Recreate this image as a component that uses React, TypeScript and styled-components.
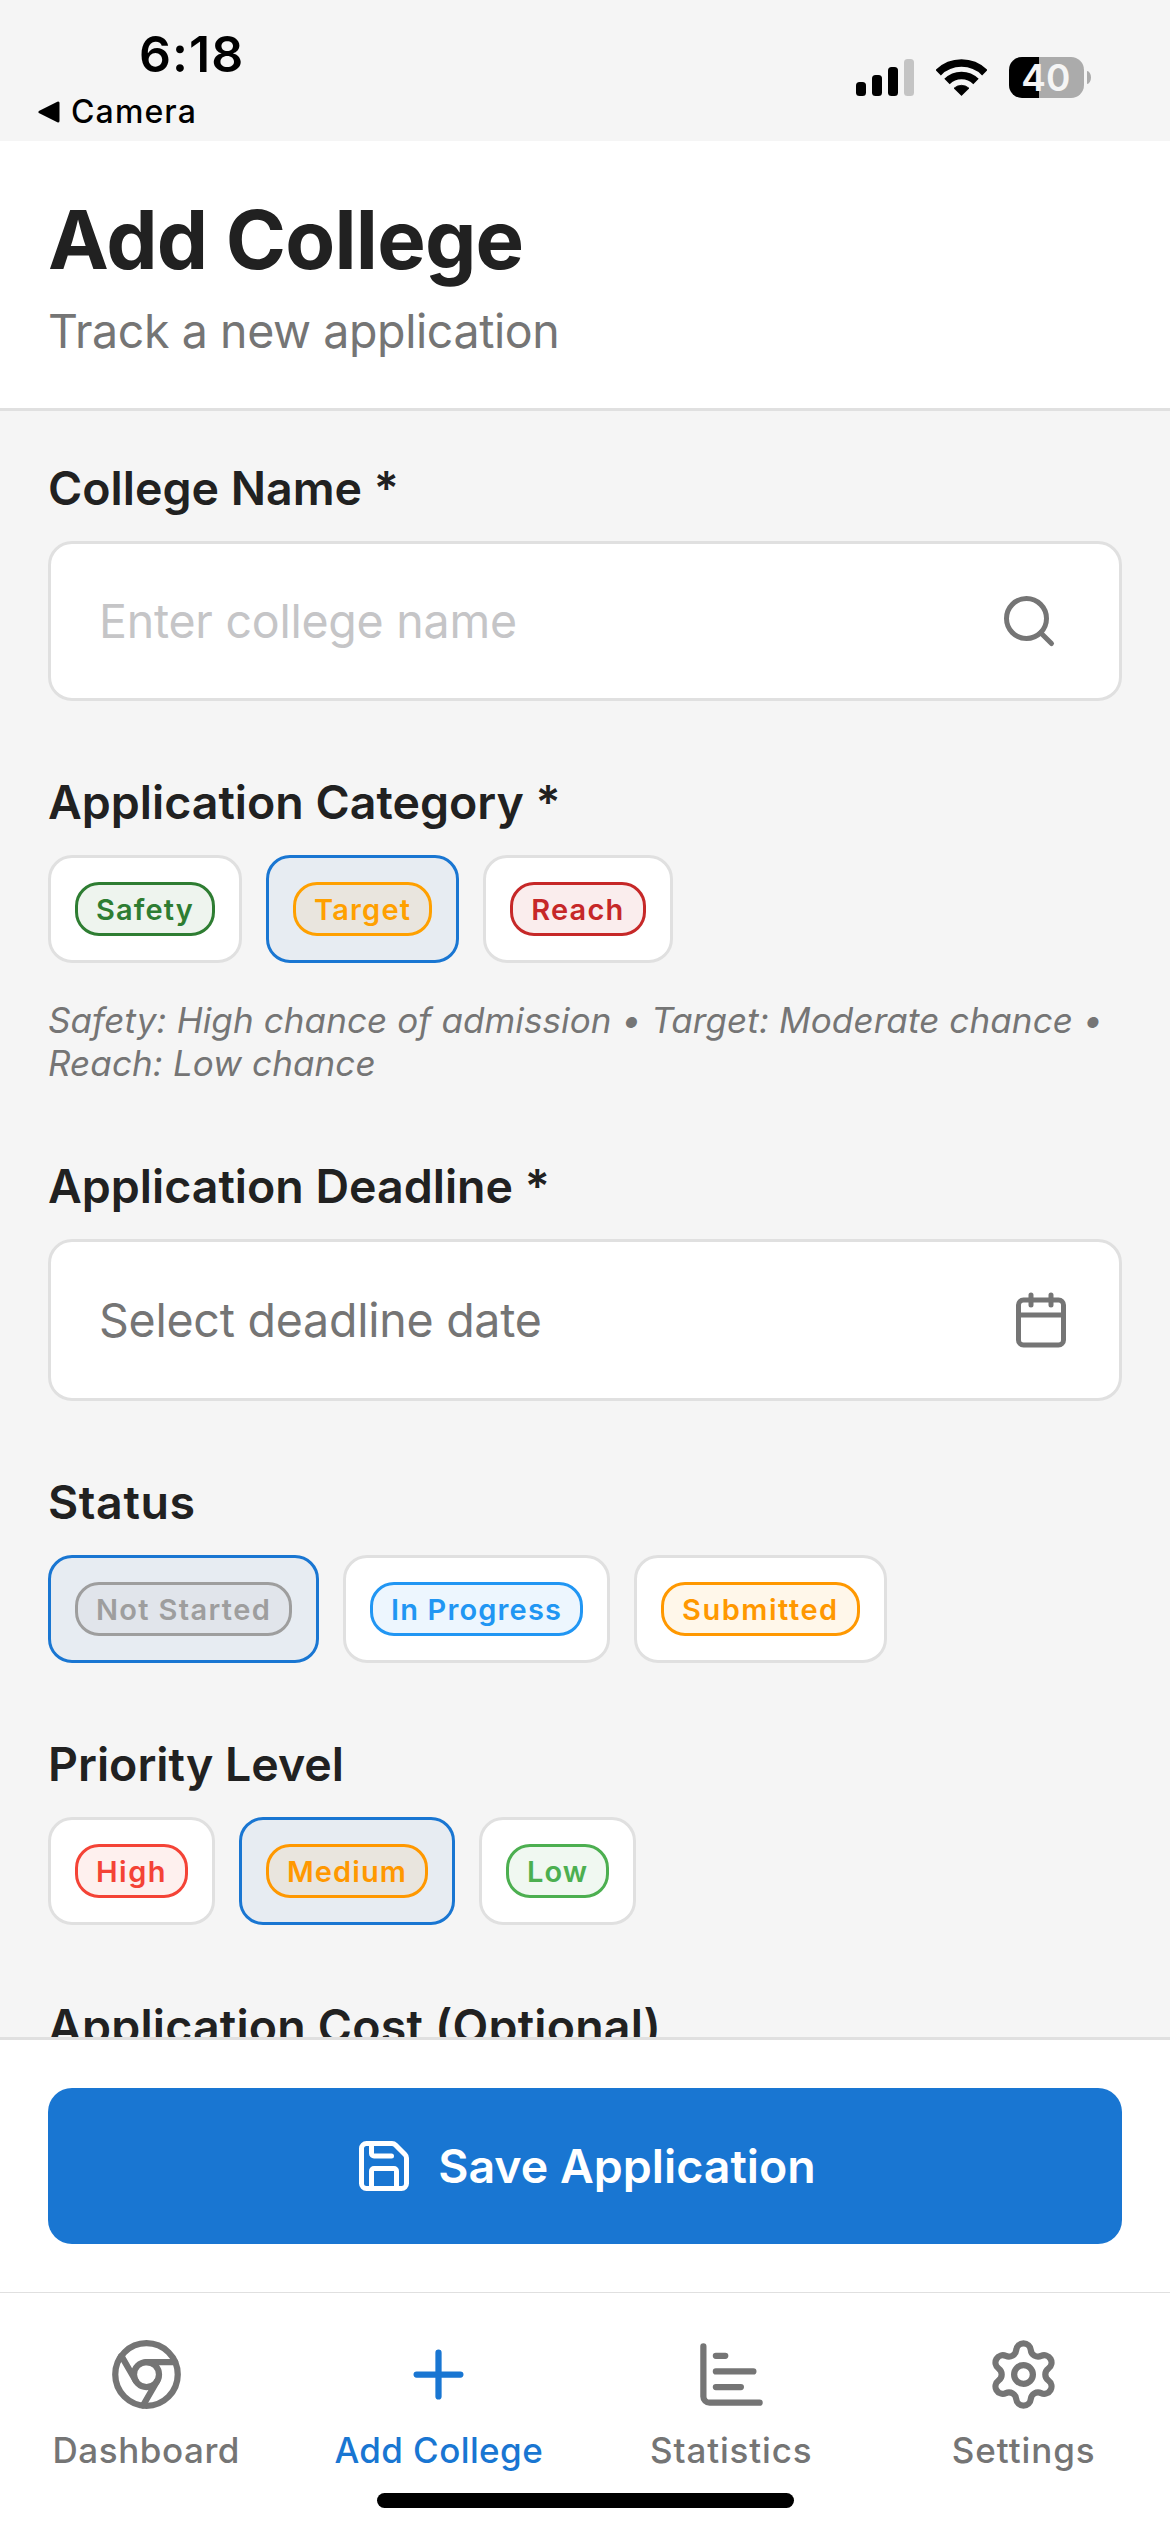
import React, { useState } from "react";
import styled, { createGlobalStyle } from "styled-components";
import { Save, Search, Settings } from "lucide-react";

const color = {
  primary: "#1976d2",
  text: "#212121",
  muted: "#757575",
  placeholder: "#c5c5c7",
  border: "#e0e0e0",
  surface: "#ffffff",
  page: "#f5f5f5",
};

const GlobalStyle = createGlobalStyle`
  * { box-sizing: border-box; }
  body {
    margin: 0;
    background: ${color.page};
    font-family: Inter, "Liberation Sans", sans-serif;
    color: ${color.text};
    overflow: hidden;
  }
  button { font: inherit; color: inherit; margin: 0; }
`;

const Screen = styled.div`
  display: flex;
  flex-direction: column;
  width: 1170px;
  height: 2532px;
  overflow: hidden;
  background: ${color.page};
`;

/* ---------- status bar ---------- */

const StatusBar = styled.div`
  display: flex;
  justify-content: space-between;
  align-items: flex-start;
  flex: none;
  height: 141px;
  padding: 24px 79px 0 38px;
  color: #000;
`;

const Clock = styled.div`
  padding-left: 101px;
  font-size: 50px;
  font-weight: 600;
  line-height: 60px;
  letter-spacing: 1.1px;
`;

const BackLink = styled.div`
  display: flex;
  align-items: center;
  gap: 11px;
  margin-top: 8px;
  font-size: 32px;
  font-weight: 500;
  line-height: 40px;
  letter-spacing: 1.12px;
`;

const Indicators = styled.div`
  display: flex;
  align-items: flex-end;
  gap: 22px;
  height: 41px;
  margin-top: 33px;
`;

const Signal = styled.div`
  display: flex;
  align-items: flex-end;
  gap: 6px;
  margin-bottom: 2px;
`;

const SignalBar = styled.span<{ $height: number; $off?: boolean }>`
  width: 10px;
  height: ${(p) => p.$height}px;
  border-radius: 3.5px;
  background: ${(p) => (p.$off ? "#c4c4c4" : "#000")};
`;

const WifiGlyph = styled.svg`
  display: block;
  margin-bottom: 2px;
`;

const Battery = styled.div`
  display: flex;
  align-items: center;
  gap: 3px;
`;

const BatteryBody = styled.div`
  width: 75px;
  height: 41px;
  border-radius: 13px;
  padding-right: 1px;
  background: linear-gradient(to right, #000 40%, #ababab 40%);
  color: ${color.page};
  font-size: 37px;
  font-weight: 600;
  line-height: 41px;
  letter-spacing: 0.3px;
  text-align: center;
`;

const BatteryCap = styled.span`
  width: 4px;
  height: 13px;
  border-radius: 0 4px 4px 0 / 0 6.5px 6.5px 0;
  background: #ababab;
`;

/* ---------- header ---------- */

const Header = styled.header`
  flex: none;
  padding: 48px 48px 48px;
  background: ${color.surface};
  border-bottom: 3px solid ${color.border};
`;

const Title = styled.h1`
  margin: 0;
  font-size: 81.5px;
  font-weight: 700;
  line-height: 101px;
  letter-spacing: -0.79px;
`;

const Subtitle = styled.p`
  margin: 12px 0 0;
  color: ${color.muted};
  font-size: 46.5px;
  line-height: 58px;
  letter-spacing: -0.41px;
`;

/* ---------- form ---------- */

const Form = styled.main`
  flex: 1;
  min-height: 0;
  overflow: hidden;
  display: flex;
  flex-direction: column;
  gap: 72px;
  padding: 48px 48px 0;
`;

const Section = styled.section`
  flex: none;
`;

const Label = styled.h2<{ $tracking?: number }>`
  margin: 0 0 24px;
  font-size: 46.5px;
  font-weight: 600;
  line-height: 58px;
  letter-spacing: ${(p) => p.$tracking ?? 0}px;
`;

const Field = styled.div<{ $height: number; $inset: number }>`
  display: flex;
  align-items: center;
  justify-content: space-between;
  height: ${(p) => p.$height}px;
  padding: 0 ${(p) => p.$inset}px 0 48px;
  background: ${color.surface};
  border: 3px solid ${color.border};
  border-radius: 24px;
  color: ${color.muted};
`;

const FieldText = styled.span<{ $placeholder?: boolean }>`
  color: ${(p) => (p.$placeholder ? color.placeholder : color.muted)};
  font-size: 46.5px;
  line-height: 58px;
  letter-spacing: -0.24px;
`;

const ChipRow = styled.div`
  display: flex;
  gap: 24px;
`;

const Chip = styled.button<{ $selected: boolean }>`
  height: 108px;
  padding: 24px;
  border: 3px solid ${(p) => (p.$selected ? color.primary : color.border)};
  border-radius: 24px;
  background: ${(p) => (p.$selected ? `${color.primary}10` : color.surface)};
`;

const Badge = styled.span<{ $color: string; $tracking: number }>`
  display: block;
  height: 54px;
  padding: 0 18px;
  border: 3px solid ${(p) => p.$color};
  border-radius: 24px;
  background: ${(p) => p.$color}15;
  color: ${(p) => p.$color};
  font-size: 29px;
  font-weight: 600;
  line-height: 49px;
  letter-spacing: ${(p) => p.$tracking}px;
  white-space: nowrap;
`;

const Help = styled.p`
  margin: 36px 0 0;
  color: ${color.muted};
  font-size: 35px;
  font-style: italic;
  line-height: 43px;
  letter-spacing: 0.1px;
`;

/* ---------- footer ---------- */

const Footer = styled.footer`
  flex: none;
  padding: 48px;
  background: ${color.surface};
  border-top: 3px solid ${color.border};
`;

const SaveButton = styled.button`
  display: flex;
  align-items: center;
  justify-content: center;
  gap: 24px;
  width: 100%;
  height: 156px;
  padding: 0;
  border: 0;
  border-radius: 24px;
  background: ${color.primary};
  color: #fff;
  font-size: 46.5px;
  font-weight: 600;
  line-height: 58px;
`;

const TabBar = styled.nav`
  flex: none;
  height: 240px;
  border-top: 1px solid ${color.border};
  background: ${color.surface};
`;

const Tabs = styled.div`
  display: grid;
  grid-template-columns: repeat(4, 1fr);
  padding-top: 44px;
`;

const Tab = styled.div<{ $active?: boolean; $tracking: number }>`
  display: flex;
  flex-direction: column;
  align-items: center;
  gap: 17px;
  color: ${(p) => (p.$active ? color.primary : color.muted)};
  font-size: 35px;
  font-weight: 500;
  line-height: 43px;
  letter-spacing: ${(p) => p.$tracking}px;
`;

const HomeIndicator = styled.div`
  width: 417px;
  height: 15px;
  margin: 21px auto 0;
  border-radius: 8px;
  background: #000;
`;

/* ---------- icons ---------- */

const LineIcon = ({ size, children }: { size: number; children: React.ReactNode }) => (
  <svg
    width={size}
    height={size}
    viewBox="0 0 24 24"
    fill="none"
    stroke="currentColor"
    strokeWidth={2}
    strokeLinecap="round"
    strokeLinejoin="round"
  >
    {children}
  </svg>
);

const CalendarIcon = () => (
  <LineIcon size={60}>
    <path d="M8 2v4M16 2v4M3 10h18" />
    <rect width="18" height="18" x="3" y="4" rx="2" />
  </LineIcon>
);

const DashboardIcon = () => (
  <LineIcon size={75}>
    <circle cx="12" cy="12" r="10" />
    <circle cx="12" cy="12" r="4" />
    <path d="M21.17 8H12M3.95 6.06 8.54 14M10.88 21.94 15.46 14" />
  </LineIcon>
);

const PlusIcon = () => (
  <LineIcon size={75}>
    <path d="M5 12h14M12 5v14" />
  </LineIcon>
);

const StatisticsIcon = () => (
  <LineIcon size={75}>
    <path d="M3 3v16a2 2 0 0 0 2 2h16M7 16h8M7 11h12M7 6h3" />
  </LineIcon>
);

const WifiIcon = () => (
  <WifiGlyph width="51" height="37" viewBox="0 0 51 37" fill="none" stroke="#000" strokeWidth="7.6">
    <path d="M2.2 13.7a33 33 0 0 1 46.6 0" />
    <path d="M11 22.5a20.5 20.5 0 0 1 29 0" />
    <path d="M18 29.2a11.2 11.2 0 0 1 15 0L25.5 36.6Z" fill="#000" strokeWidth="0.8" strokeLinejoin="round" />
  </WifiGlyph>
);

/* ---------- data ---------- */

type Option = { name: string; color: string; tracking: number };

const categories: Option[] = [
  { name: "Safety", color: "#2e7d32", tracking: 1.13 },
  { name: "Target", color: "#ffa000", tracking: 1.2 },
  { name: "Reach", color: "#c62828", tracking: 1.2 },
];

const statuses: Option[] = [
  { name: "Not Started", color: "#9e9e9e", tracking: 1.34 },
  { name: "In Progress", color: "#2196f3", tracking: 1.15 },
  { name: "Submitted", color: "#ff9800", tracking: 1.52 },
];

const priorities: Option[] = [
  { name: "High", color: "#f44336", tracking: 1.48 },
  { name: "Medium", color: "#ff9800", tracking: 1.08 },
  { name: "Low", color: "#4caf50", tracking: 1.03 },
];

function ChipGroup({ options, initial }: { options: Option[]; initial: string }) {
  const [selected, setSelected] = useState(initial);
  return (
    <ChipRow>
      {options.map((o) => (
        <Chip key={o.name} type="button" $selected={o.name === selected} onClick={() => setSelected(o.name)}>
          <Badge $color={o.color} $tracking={o.tracking}>
            {o.name}
          </Badge>
        </Chip>
      ))}
    </ChipRow>
  );
}

export default function App() {
  return (
    <>
      <GlobalStyle />
      <Screen>
        <StatusBar>
          <div>
            <Clock>6:18</Clock>
            <BackLink>
              <svg width="22" height="22" viewBox="0 0 22 22">
                <path d="M2 11 20 2v18Z" fill="#000" stroke="#000" strokeWidth="3" strokeLinejoin="round" />
              </svg>
              Camera
            </BackLink>
          </div>
          <Indicators>
            <Signal>
              <SignalBar $height={14} />
              <SignalBar $height={21} />
              <SignalBar $height={29} />
              <SignalBar $height={37} $off />
            </Signal>
            <WifiIcon />
            <Battery>
              <BatteryBody>40</BatteryBody>
              <BatteryCap />
            </Battery>
          </Indicators>
        </StatusBar>

        <Header>
          <Title>Add College</Title>
          <Subtitle>Track a new application</Subtitle>
        </Header>

        <Form>
          <Section>
            <Label>College Name *</Label>
            <Field $height={160} $inset={60}>
              <FieldText $placeholder>Enter college name</FieldText>
              <Search size={60} strokeWidth={2} />
            </Field>
          </Section>

          <Section>
            <Label>Application Category *</Label>
            <ChipGroup options={categories} initial="Target" />
            <Help>
              Safety: High chance of admission • Target: Moderate chance • Reach: Low chance
            </Help>
          </Section>

          <Section>
            <Label>Application Deadline *</Label>
            <Field $height={162} $inset={48}>
              <FieldText>Select deadline date</FieldText>
              <CalendarIcon />
            </Field>
          </Section>

          <Section>
            <Label $tracking={0.6}>Status</Label>
            <ChipGroup options={statuses} initial="Not Started" />
          </Section>

          <Section>
            <Label>Priority Level</Label>
            <ChipGroup options={priorities} initial="Medium" />
          </Section>

          <Section>
            <Label $tracking={0.19}>Application Cost (Optional)</Label>
          </Section>
        </Form>

        <Footer>
          <SaveButton type="button">
            <Save size={60} strokeWidth={2} />
            Save Application
          </SaveButton>
        </Footer>

        <TabBar>
          <Tabs>
            <Tab $tracking={0.55}>
              <DashboardIcon />
              Dashboard
            </Tab>
            <Tab $active $tracking={0.39}>
              <PlusIcon />
              Add College
            </Tab>
            <Tab $tracking={0.85}>
              <StatisticsIcon />
              Statistics
            </Tab>
            <Tab $tracking={0.92}>
              <Settings size={75} strokeWidth={2} />
              Settings
            </Tab>
          </Tabs>
          <HomeIndicator />
        </TabBar>
      </Screen>
    </>
  );
}
